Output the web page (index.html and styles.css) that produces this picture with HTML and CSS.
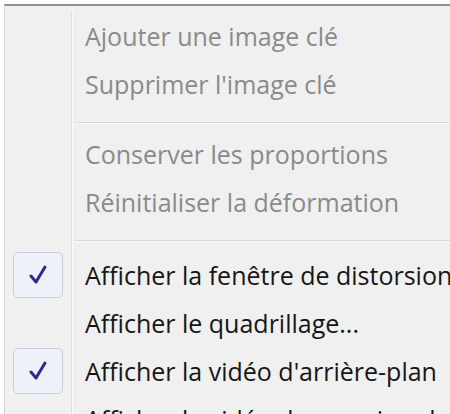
FILE: index.html
```html
<!DOCTYPE html>
<html lang="fr">
<head>
<meta charset="utf-8">
<link rel="stylesheet" href="styles.css">
</head>
<body>
<div class="menu">
  <div class="item disabled"><span class="icon"></span><span class="label">Ajouter une image clé</span></div>
  <div class="item disabled"><span class="icon"></span><span class="label">Supprimer l'image clé</span></div>
  <div class="sep"><span class="icon"></span><span class="line"></span></div>
  <div class="item disabled"><span class="icon"></span><span class="label">Conserver les proportions</span></div>
  <div class="item disabled"><span class="icon"></span><span class="label">Réinitialiser la déformation</span></div>
  <div class="sep sep-wide"><span class="icon"></span><span class="line"></span></div>
  <div class="item"><span class="icon"><span class="check"><svg width="24" height="24" viewBox="0 0 24 24"><path d="M5 13 L10 19 L19 4" fill="none" stroke="#2b2b8f" stroke-width="3" stroke-linecap="round" stroke-linejoin="round"/></svg></span></span><span class="label">Afficher la fenêtre de distorsion</span></div>
  <div class="item"><span class="icon"></span><span class="label">Afficher le quadrillage...</span></div>
  <div class="item"><span class="icon"><span class="check"><svg width="24" height="24" viewBox="0 0 24 24"><path d="M5 13 L10 19 L19 4" fill="none" stroke="#2b2b8f" stroke-width="3" stroke-linecap="round" stroke-linejoin="round"/></svg></span></span><span class="label">Afficher la vidéo d'arrière-plan</span></div>
  <div class="item"><span class="icon"></span><span class="label">Afficher la vidéo de premier plan</span></div>
</div>
</body>
</html>
```
FILE: styles.css
```css
html, body {
  margin: 0;
  padding: 0;
  background: #ffffff;
  overflow: hidden;
}
body {
  width: 450px;
  height: 414px;
}
.menu {
  margin: 4px 0 0 4px;
  border-top: 2px solid #8e8e8e;
  border-left: 1px solid #d6d6d6;
  background: #f0f0f0;
  padding-top: 6px;
  height: 420px;
  overflow: hidden;
  font-family: "Open Sans", "Noto Sans", sans-serif;
  font-size: 25px;
  color: #161616;
}
.item, .sep {
  display: flex;
}
.item {
  height: 48px;
  align-items: center;
}
.icon {
  flex: 0 0 66px;
  align-self: stretch;
  border-right: 1px solid #dedede;
  box-shadow: 1px 0 0 #fbfbfb;
  display: flex;
  align-items: center;
  justify-content: center;
}
.sep {
  height: 22px;
}
.sep-wide {
  height: 25px;
}
.line {
  flex: 1;
  margin-top: 14px;
  height: 1px;
  background: #d8d8d8;
  border-bottom: 1px solid #fbfbfb;
  margin-left: 2px;
}
.label {
  padding-left: 13px;
  white-space: nowrap;
  font-weight: 500;
}
.disabled .label {
  color: #8a8a8a;
  font-weight: 400;
}
.check {
  width: 50px;
  height: 46px;
  box-sizing: border-box;
  border: 1px solid #c3cfe0;
  border-radius: 5px;
  background: #eef2f8;
  display: flex;
  align-items: center;
  justify-content: center;
}
```
